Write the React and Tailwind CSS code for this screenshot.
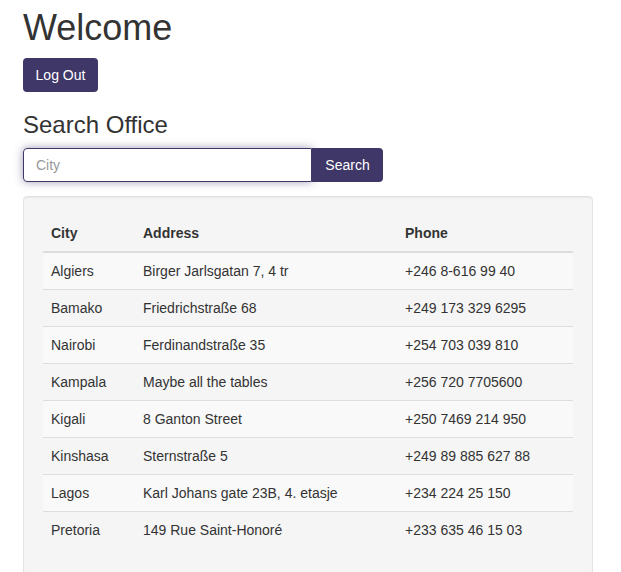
import React, { useState } from 'react';

const offices = [
  { city: 'Algiers', address: 'Birger Jarlsgatan 7, 4 tr', phone: '+246 8-616 99 40' },
  { city: 'Bamako', address: 'Friedrichstraße 68', phone: '+249 173 329 6295' },
  { city: 'Nairobi', address: 'Ferdinandstraße 35', phone: '+254 703 039 810' },
  { city: 'Kampala', address: 'Maybe all the tables', phone: '+256 720 7705600' },
  { city: 'Kigali', address: '8 Ganton Street', phone: '+250 7469 214 950' },
  { city: 'Kinshasa', address: 'Sternstraße 5', phone: '+249 89 885 627 88' },
  { city: 'Lagos', address: 'Karl Johans gate 23B, 4. etasje', phone: '+234 224 25 150' },
  { city: 'Pretoria', address: '149 Rue Saint-Honoré', phone: '+233 635 46 15 03' },
];

const App = () => {
  const [city, setCity] = useState('');

  return (
    <div className="min-h-screen bg-white px-[23px] pt-[8px] text-[14px] leading-[20px] text-[#333] font-['Liberation_Sans',Arial,sans-serif]">
      {/* Header */}
      <h1 className="text-[36px] leading-[39.6px] font-normal">Welcome</h1>
      <button className="mt-[10px] h-[34px] w-[75px] rounded-[4px] bg-[#3f3768] text-[14px] text-white">
        Log Out
      </button>

      {/* Search */}
      <h3 className="mt-[20px] text-[24px] leading-[26.4px] font-normal">Search Office</h3>
      <div className="mt-[10px] flex w-[360px]">
        <input
          value={city}
          onChange={(e) => setCity(e.target.value)}
          placeholder="City"
          className="h-[34px] w-[289px] rounded-l-[4px] border border-[#3f3768] px-[12px] text-[14px] text-[#555] placeholder:text-[#999] shadow-[0_0_8px_rgba(63,55,104,0.5)] outline-none"
        />
        <button className="h-[34px] w-[71px] rounded-r-[4px] bg-[#3f3768] text-[14px] text-white">
          Search
        </button>
      </div>

      {/* Results */}
      <div className="mt-[14px] w-[570px] rounded-[4px] border border-[#e3e3e3] bg-[#f5f5f5] px-[19px] pt-[18px] pb-[40px] shadow-[inset_0_1px_1px_rgba(0,0,0,0.05)]">
        <table className="w-[530px] border-collapse text-left">
          <thead>
            <tr className="border-b-2 border-[#ddd]">
              <th className="w-[92px] p-[8px] font-bold">City</th>
              <th className="w-[262px] p-[8px] font-bold">Address</th>
              <th className="p-[8px] font-bold">Phone</th>
            </tr>
          </thead>
          <tbody>
            {offices.map((o, i) => (
              <tr
                key={o.city}
                className={`${i > 0 ? 'border-t border-[#ddd]' : ''} ${i % 2 === 0 ? 'bg-[#f9f9f9]' : ''}`}
              >
                <td className="h-[36px] px-[8px] py-[8px]">{o.city}</td>
                <td className="px-[8px] py-[8px]">{o.address}</td>
                <td className="px-[8px] py-[8px]">{o.phone}</td>
              </tr>
            ))}
          </tbody>
        </table>
      </div>
    </div>
  );
};

export default App;
